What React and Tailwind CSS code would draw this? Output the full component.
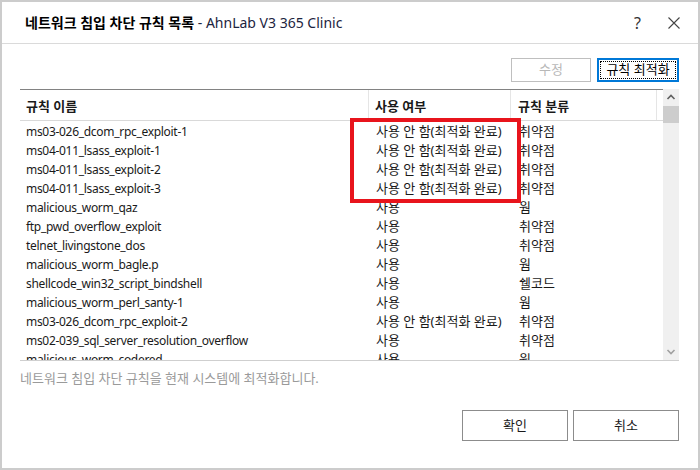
import React from "react";

const rows = [
  ["ms03-026_dcom_rpc_exploit-1", "사용 안 함(최적화 완료)", "취약점"],
  ["ms04-011_lsass_exploit-1", "사용 안 함(최적화 완료)", "취약점"],
  ["ms04-011_lsass_exploit-2", "사용 안 함(최적화 완료)", "취약점"],
  ["ms04-011_lsass_exploit-3", "사용 안 함(최적화 완료)", "취약점"],
  ["malicious_worm_qaz", "사용", "웜"],
  ["ftp_pwd_overflow_exploit", "사용", "취약점"],
  ["telnet_livingstone_dos", "사용", "취약점"],
  ["malicious_worm_bagle.p", "사용", "웜"],
  ["shellcode_win32_script_bindshell", "사용", "쉘코드"],
  ["malicious_worm_perl_santy-1", "사용", "웜"],
  ["ms03-026_dcom_rpc_exploit-2", "사용 안 함(최적화 완료)", "취약점"],
  ["ms02-039_sql_server_resolution_overflow", "사용", "취약점"],
  ["malicious_worm_codered", "사용", "웜"],
];

const font = { fontFamily: '"Noto Sans", "Noto Sans CJK KR", sans-serif' };

export default function App() {
  return (
    <div
      className="relative w-[700px] h-[470px] border-2 border-[#cccccc] bg-white text-[#1a1a1a] flex flex-col overflow-hidden"
      style={font}
    >
      {/* title bar */}
      <div className="h-[42px] shrink-0 flex items-center pl-[23px] pr-[18px] border-b border-[#dadada]">
        <div className="flex-1 text-[14px] leading-none whitespace-nowrap">
          <span className="font-bold text-black">네트워크 침입 차단 규칙 목록</span>
          <span className="text-[#1c2440]"> - AhnLab V3 365 Clinic</span>
        </div>
        <span className="text-[16px] text-[#333] mr-[27px] leading-none">?</span>
        <svg width="12" height="12" viewBox="0 0 12 12" className="shrink-0">
          <path d="M0.5 0.5 L11.5 11.5 M11.5 0.5 L0.5 11.5" stroke="#444" strokeWidth="1.1" fill="none" />
        </svg>
      </div>

      {/* toolbar */}
      <div className="flex justify-end gap-[6px] pr-[19px] mt-[14px] h-[24px] shrink-0">
        <div className="w-[80px] h-[24px] border border-[#bfbfbf] flex items-center justify-center text-[13px] text-[#b8b8b8]">
          수정
        </div>
        <div className="w-[82px] h-[24px] border-2 border-[#0078d7] p-[1px] flex">
          <div className="flex-1 border border-dotted border-black flex items-center justify-center text-[13px] text-black">
            규칙 최적화
          </div>
        </div>
      </div>

      {/* table */}
      <div className="ml-[18px] mr-[19px] mt-[7px] h-[272px] shrink-0 flex border-b border-[#cfcfcf]">
        <div className="flex-1 flex flex-col border-t border-[#828282] overflow-hidden">
          <div className="h-[31px] shrink-0 flex border-b border-[#d9d9d9] font-bold text-[13px]">
            <div className="w-[349px] pl-[6px] pt-[3px] flex items-center border-r border-[#e5e5e5]">규칙 이름</div>
            <div className="w-[142px] pl-[6px] pt-[3px] flex items-center border-r border-[#e5e5e5]">사용 여부</div>
            <div className="w-[146px] pl-[7px] pt-[3px] flex items-center border-r border-[#e5e5e5]">규칙 분류</div>
          </div>
          <div className="flex-1 overflow-hidden pt-[1px]">
            {rows.map((r, i) => (
              <div key={i} className="h-[19px] flex items-center whitespace-nowrap text-[#1a1a1a]">
                <div className="w-[349px] pl-[6px] text-[12px] tracking-[-0.3px]">{r[0]}</div>
                <div className="w-[142px] pl-[7px] text-[13px]">{r[1]}</div>
                <div className="w-[146px] pl-[8px] text-[13px]">{r[2]}</div>
              </div>
            ))}
          </div>
        </div>
        <div className="w-[16px] bg-[#f0f0f0] flex flex-col items-center">
          <svg width="16" height="17" viewBox="0 0 16 17">
            <path d="M4.5 10 L8 6.5 L11.5 10" stroke="#606060" strokeWidth="1.6" fill="none" />
          </svg>
          <div className="w-[16px] h-[17px] bg-[#cdcdcd]" />
          <div className="flex-1" />
          <svg width="16" height="17" viewBox="0 0 16 17">
            <path d="M4.5 7 L8 10.5 L11.5 7" stroke="#a0a0a0" strokeWidth="1.6" fill="none" />
          </svg>
        </div>
      </div>

      {/* footer hint */}
      <div className="ml-[18px] mt-[9px] text-[13px] text-[#9a9a9a] leading-[16px]">
        네트워크 침입 차단 규칙을 현재 시스템에 최적화합니다.
      </div>

      {/* bottom buttons */}
      <div className="flex justify-end gap-[5px] pr-[19px] mt-[24px]">
        <div className="w-[106px] h-[31px] border border-[#8c8c8c] flex items-center justify-center text-[13px] text-[#1a1a1a]">
          확인
        </div>
        <div className="w-[106px] h-[31px] border border-[#8c8c8c] flex items-center justify-center text-[13px] text-[#1a1a1a]">
          취소
        </div>
      </div>

      {/* red highlight */}
      <div className="absolute left-[348px] top-[116px] w-[171px] h-[85px] border-4 border-[#e8141c]" />
    </div>
  );
}
